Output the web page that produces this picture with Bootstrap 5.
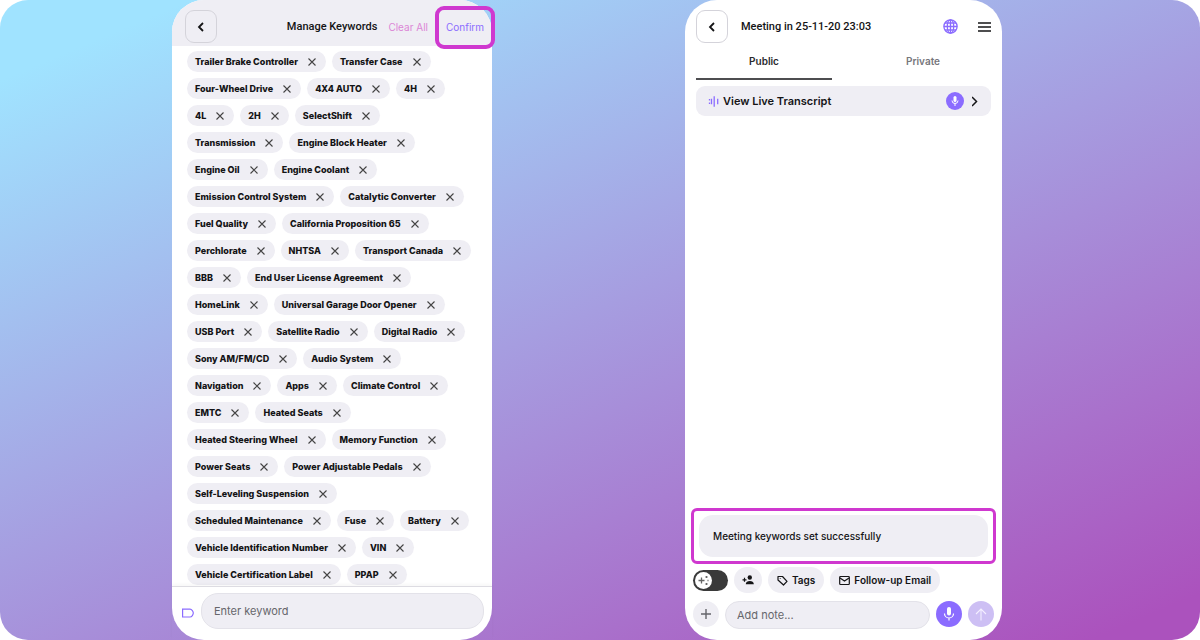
<!DOCTYPE html>
<html lang="en">
<head>
<meta charset="utf-8">
<meta name="viewport" content="width=device-width, initial-scale=1">
<title>Manage Keywords</title>
<link href="https://cdn.jsdelivr.net/npm/bootstrap@5.3.0/dist/css/bootstrap.min.css" rel="stylesheet">
<style>
  :root { --soft: #efeef4; --violet: #8b6cff; --magenta: #cf38cf; }
  body { font-family: Inter, "Liberation Sans", sans-serif; font-size: 10px; line-height: 16px; color: #141416; background: #fff; }
  .stage { min-height: 100vh; border-radius: 28px; overflow: hidden;
    display: grid; grid-template-columns: 172fr 320fr 193fr 317fr 198fr;
    background: linear-gradient(157deg, #a0e3ff 7%, #a69de0 49%, #ab52bd 96%); }
  .phone { background: #fff; position: relative; border-radius: 32px; }
  .phone-left { grid-column: 2; }
  .phone-right { grid-column: 4; padding: 10px 8px 11px; }
  .upper { padding: 0 3px; }
  button { color: inherit; font: inherit; border: 0; background: none; padding: 0; }
  svg { display: block; flex: none; fill: none; stroke: currentColor; }
  .accent { color: var(--violet); }
  .bar-top { background: var(--soft); height: 46px; padding: 10px 8px 3px 13px; border-radius: 32px 32px 0 0; }
  .back { width: 32px; height: 33px; border: 1px solid #d4d3da; border-radius: 9px; display: grid; place-items: center; }
  .title { font-family: Roboto, Inter, sans-serif; font-size: 11px; font-weight: 500; margin: 0; line-height: 17px; }
  .title-left { margin: 0 11px 0 auto; }
  .title-right { margin-left: 13px; }
  .clear { color: #dc86d6; margin-right: 18px; }
  .ring { position: absolute; border: 4px solid var(--magenta); border-radius: 9px; pointer-events: none; }
  .ring-confirm { top: 6px; right: -3px; width: 60px; height: 43px; }
  .ring-toast { inset: -7px -8px; border-width: 3px; border-radius: 6px; }
  .chips { padding: 5px 15px 1px; gap: 6px; margin: 0; list-style: none; }
  .chip { background: var(--soft); border-radius: 11px; height: 21px; padding: 0 9px 0 8px; gap: 9px; font-size: 9px; font-weight: 800; white-space: nowrap; }
  .chip svg { color: #444; }
  .entry { border-top: 1px solid #dddce2; box-shadow: 0 -2px 3px #00000008; padding: 6px 8px 11px 10px; gap: 7px; }
  .field { background: var(--soft); border: 1px solid #e3e2e9; color: #333; min-width: 0; font-size: 11px; padding: 0 12px; }
  .field::placeholder { color: #66666b; opacity: 1; }
  .field-key { height: 36px; border-radius: 17px; }
  .field-note { height: 28px; border-radius: 14px; padding: 0 11px; }
  .tabs { gap: 23px; margin-top: 1px; }
  .tab { flex: 1; height: 36px; font-weight: 600; color: #77777c; border-bottom: 2px solid transparent; }
  .tab.on { color: #2a2a2d; border-color: #4d4d50; }
  .live { background: var(--soft); border-radius: 9px; height: 30px; margin-top: 6px; padding: 0 12px; font-size: 11px; font-weight: 600; }
  .disc { width: 26px; height: 26px; border-radius: 50%; display: grid; place-items: center; flex: none; background: var(--soft); }
  .disc.small-disc { width: 18px; height: 18px; }
  .disc.violet { background: var(--violet); color: #fff; }
  .disc.pale { background: #cdbff4; color: #f3efff; }
  .disc.plus { color: #66666b; }
  .toast-line { background: var(--soft); border-radius: 14px; height: 42px; padding: 0 14px; margin: 0 6px; font-weight: 500; }
  .actions { gap: 6px; margin-top: 10px; }
  .pill { background: var(--soft); border-radius: 13px; height: 26px; padding: 0 9px; gap: 4px; font-weight: 600; white-space: nowrap; }
  .pill.slim { padding: 0 8px; }
  .compose { gap: 6px; margin-top: 8px; }
  .ai { position: relative; width: 35px; height: 21px; flex: none; }
  .ai input { appearance: none; width: 35px; height: 21px; border-radius: 11px; background: #3a3a3a; margin: 0; display: block; }
  .knob { position: absolute; left: 2px; top: 2px; width: 17px; height: 17px; background: #fff; border-radius: 50%; color: #666; pointer-events: none; }
</style>
</head>
<body>
<main class="stage">
  <section class="phone phone-left d-flex flex-column" aria-label="Manage keywords">
    <header class="bar-top d-flex align-items-center">
      <button class="back" aria-label="Back"><svg width="8" height="10" viewBox="0 0 8 10" stroke-width="1.8"><path d="M6 1 2 5l4 4"/></svg></button>
      <h1 class="title title-left">Manage Keywords</h1>
      <button class="clear">Clear All</button>
      <button class="accent">Confirm</button>
      <span class="ring ring-confirm"></span>
    </header>
    <ul class="chips d-flex flex-wrap align-content-start flex-grow-1" id="chips"></ul>
    <div class="entry d-flex align-items-center">
      <svg class="accent" width="12" height="14" viewBox="0 0 12 14" stroke-width="1.2"><path d="M.6 5.200h7.400c1.900 0 3.300 2.600 3.300 3.900S9.900 13 8 13H.6z"/></svg>
      <input class="field field-key flex-grow-1" type="text" placeholder="Enter keyword" aria-label="Enter keyword">
    </div>
  </section>

  <section class="phone phone-right d-flex flex-column" aria-label="Meeting">
    <div class="upper d-flex flex-column">
      <header class="d-flex align-items-center">
        <button class="back" aria-label="Back"><svg width="8" height="10" viewBox="0 0 8 10" stroke-width="1.8"><path d="M6 1 2 5l4 4"/></svg></button>
        <h2 class="title title-right">Meeting in 25-11-20 23:03</h2>
        <button class="ms-auto accent" aria-label="Language"><svg width="15" height="15" viewBox="0 0 15 15" stroke-width="1.3"><circle cx="7.500" cy="7.500" r="6.600"/><ellipse cx="7.500" cy="7.500" rx="3.200" ry="6.600"/><path d="M7.500.8v13.400M.8 7.500h13.400M1.800 4h11.400M1.800 11h11.400"/></svg></button>
        <button class="ms-3 ps-1" aria-label="Menu"><svg width="13" height="10" viewBox="0 0 13 10" stroke-width="1.300"><path d="M0 1h13M0 5h13M0 9h13"/></svg></button>
      </header>
      <nav class="tabs d-flex" aria-label="Notes"><button class="tab on">Public</button><button class="tab">Private</button></nav>
      <button class="live d-flex align-items-center">
        <svg class="accent" width="11" height="11" viewBox="0 0 11 11" stroke-width="1.300"><path d="M1.500 3v1.500M1.500 6.500v1.500M3.500 2.700v5.600M6.200.3v10.400M9.700 2.700v5.600"/></svg>
        <span class="ms-1">View Live Transcript</span>
        <span class="disc small-disc violet ms-auto"><svg width="10" height="12" viewBox="0 0 10 12"><rect x="3.500" y="1" width="3" height="6" rx="1.500" fill="#fff" stroke="none"/><path d="M2 5.500a3 3 0 0 0 6 0M5 8.500V11"/></svg></span>
        <svg class="ms-2" width="7" height="11" viewBox="0 0 7 11" stroke-width="1.500"><path d="M0 1l4.500 4.500L0 10"/></svg>
      </button>
    </div>
    <div class="mt-auto position-relative toast-line d-flex align-items-center" role="status">Meeting keywords set successfully<span class="ring ring-toast"></span></div>
    <div class="actions d-flex align-items-center">
      <label class="ai"><input type="checkbox" aria-label="AI assist"><span class="knob"><svg width="17" height="17" viewBox="0 0 17 17" stroke-width="1.300"><path d="M6.500 5.500v6M3.500 8.500h6M11.500 4v2M10.500 5h2M12.500 8.500h1M11.500 11v2M10.500 12h2"/></svg></span></label>
      <button class="pill slim" aria-label="Add person"><svg width="12" height="10" viewBox="0 0 12 10"><g fill="currentColor" stroke="none"><circle cx="7.800" cy="2.500" r="2.200"/><path d="M3.800 9.300c0-2.400 1.800-3.400 4-3.400s4 1 4 3.400z"/></g><path d="M2.500 2.800v4M.5 4.800h4" stroke-width="1.200"/></svg></button>
      <button class="pill d-flex align-items-center"><svg width="11" height="11" viewBox="0 0 11 11" stroke-width="1.200"><path d="M1 1.500h4.500L10 6.300 6.500 10 1 5z" stroke-linejoin="round"/><circle cx="3.200" cy="3.500" r=".5" fill="currentColor" stroke="none"/></svg>Tags</button>
      <button class="pill d-flex align-items-center"><svg width="11" height="11" viewBox="0 0 11 11" stroke-width="1.200"><rect x=".7" y="1.500" width="9.600" height="8" rx=".8"/><path d="m1 3 4.500 3L10 3"/></svg>Follow-up Email</button>
    </div>
    <div class="compose d-flex align-items-start">
      <button class="disc plus" aria-label="Add"><svg width="12" height="12" viewBox="0 0 12 12" stroke-width="1.400"><path d="M6 1v10M1 6h10"/></svg></button>
      <input class="field field-note flex-grow-1" type="text" placeholder="Add note..." aria-label="Add note">
      <button class="disc violet" aria-label="Record"><svg width="12" height="16" viewBox="0 0 12 16" stroke-width="1.200"><rect x="4" y="1" width="4" height="8.500" rx="2" fill="#fff" stroke="none"/><path d="M1.500 7.500a4.500 4.500 0 0 0 9 0M6 12v2.500"/></svg></button>
      <button class="disc pale" aria-label="Send"><svg width="12" height="13" viewBox="0 0 12 13" stroke-width="1.100"><path d="M6 12.500V1M1 6l5-5 5 5"/></svg></button>
    </div>
  </section>
</main>
<script src="https://cdn.jsdelivr.net/npm/bootstrap@5.3.0/dist/js/bootstrap.bundle.min.js"></script>
<script>
  const words = ["Trailer Brake Controller","Transfer Case","Four-Wheel Drive","4X4 AUTO","4H","4L","2H","SelectShift","Transmission","Engine Block Heater","Engine Oil","Engine Coolant","Emission Control System","Catalytic Converter","Fuel Quality","California Proposition 65","Perchlorate","NHTSA","Transport Canada","BBB","End User License Agreement","HomeLink","Universal Garage Door Opener","USB Port","Satellite Radio","Digital Radio","Sony AM/FM/CD","Audio System","Navigation","Apps","Climate Control","EMTC","Heated Seats","Heated Steering Wheel","Memory Function","Power Seats","Power Adjustable Pedals","Self-Leveling Suspension","Scheduled Maintenance","Fuse","Battery","Vehicle Identification Number","VIN","Vehicle Certification Label","PPAP"];
  document.getElementById("chips").innerHTML = words.map(w =>
    `<li class="chip d-flex align-items-center"><span>${w}</span><button aria-label="Remove ${w}"><svg width="10" height="10" viewBox="0 0 10 10" stroke-width="1.1"><path d="m1.500 1.500 7 7m0-7-7 7"/></svg></button></li>`).join("");
</script>
</body>
</html>
